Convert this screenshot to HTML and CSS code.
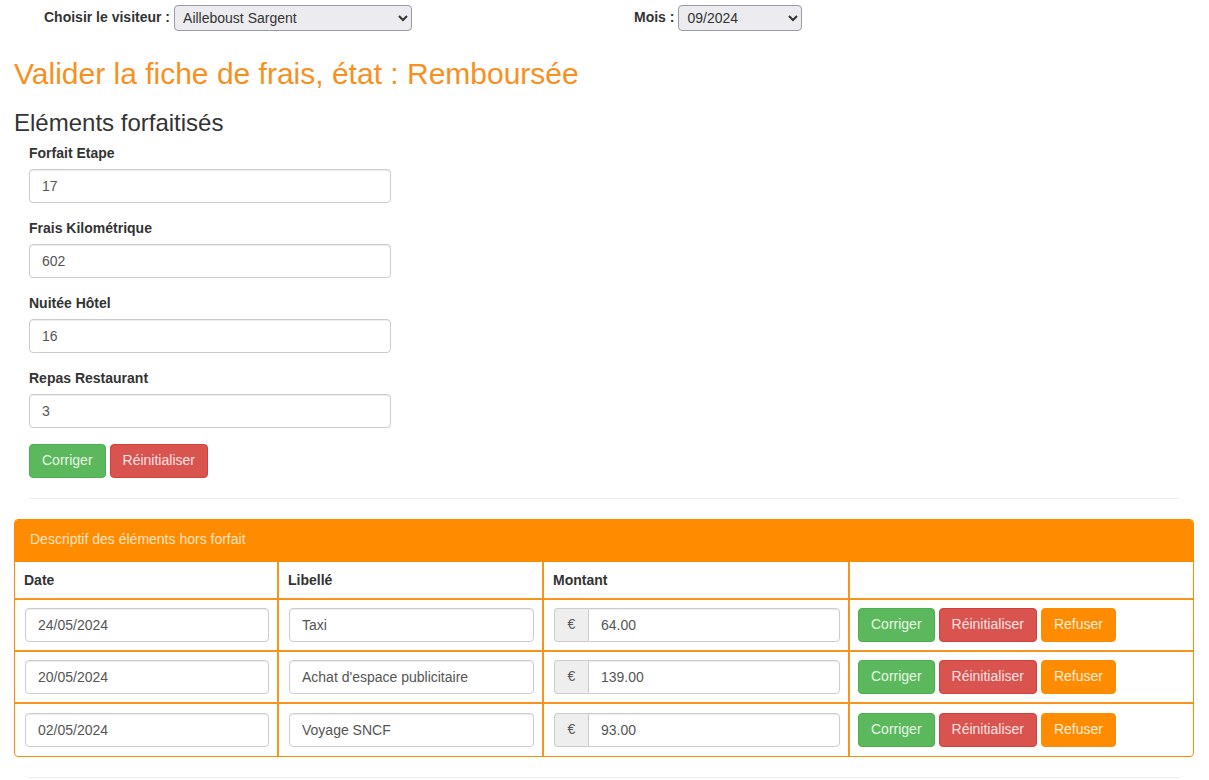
FILE: index.html
```html
<!DOCTYPE html>
<html lang="fr">
<head>
<meta charset="utf-8">
<title>Valider la fiche de frais</title>
<link rel="stylesheet" href="styles.css">
</head>
<body>
<div class="container">
  <div class="topbar">
    <div class="topcol">
      <label class="toplabel" for="visiteur">Choisir le visiteur :</label>
      <select id="visiteur" class="sel sel-visiteur"><option>Ailleboust Sargent</option></select>
    </div>
    <div class="topcol">
      <label class="toplabel" for="mois">Mois :</label>
      <select id="mois" class="sel sel-mois"><option>09/2024</option></select>
    </div>
  </div>

  <h2 class="title">Valider la fiche de frais, état : Remboursée</h2>
  <h3 class="subtitle">Eléments forfaitisés</h3>

  <form class="forfait">
    <div class="form-group">
      <label class="lbl">Forfait Etape</label>
      <input class="form-control" type="text" value="17">
    </div>
    <div class="form-group">
      <label class="lbl">Frais Kilométrique</label>
      <input class="form-control" type="text" value="602">
    </div>
    <div class="form-group">
      <label class="lbl">Nuitée Hôtel</label>
      <input class="form-control" type="text" value="16">
    </div>
    <div class="form-group">
      <label class="lbl">Repas Restaurant</label>
      <input class="form-control" type="text" value="3">
    </div>
    <div class="btns">
      <button type="button" class="btn btn-success">Corriger</button>
      <button type="button" class="btn btn-danger">Réinitialiser</button>
    </div>
  </form>

  <hr class="sep">

  <div class="panel">
    <div class="panel-heading">Descriptif des éléments hors forfait</div>
    <table class="tbl">
      <colgroup>
        <col class="c-date"><col class="c-lib"><col class="c-mont"><col class="c-act">
      </colgroup>
      <thead>
        <tr><th>Date</th><th>Libellé</th><th>Montant</th><th></th></tr>
      </thead>
      <tbody>
        <tr>
          <td><input class="form-control" type="text" value="24/05/2024"></td>
          <td><input class="form-control" type="text" value="Taxi"></td>
          <td><div class="input-group"><span class="addon">€</span><input class="form-control grp" type="text" value="64.00"></div></td>
          <td class="actions"><button type="button" class="btn btn-success">Corriger</button><button type="button" class="btn btn-danger">Réinitialiser</button><button type="button" class="btn btn-warning">Refuser</button></td>
        </tr>
        <tr>
          <td><input class="form-control" type="text" value="20/05/2024"></td>
          <td><input class="form-control" type="text" value="Achat d'espace publicitaire"></td>
          <td><div class="input-group"><span class="addon">€</span><input class="form-control grp" type="text" value="139.00"></div></td>
          <td class="actions"><button type="button" class="btn btn-success">Corriger</button><button type="button" class="btn btn-danger">Réinitialiser</button><button type="button" class="btn btn-warning">Refuser</button></td>
        </tr>
        <tr>
          <td><input class="form-control" type="text" value="02/05/2024"></td>
          <td><input class="form-control" type="text" value="Voyage SNCF"></td>
          <td><div class="input-group"><span class="addon">€</span><input class="form-control grp" type="text" value="93.00"></div></td>
          <td class="actions"><button type="button" class="btn btn-success">Corriger</button><button type="button" class="btn btn-danger">Réinitialiser</button><button type="button" class="btn btn-warning">Refuser</button></td>
        </tr>
      </tbody>
    </table>
  </div>

  <hr class="sep sep-bottom">
</div>
</body>
</html>
```

FILE: styles.css
```css
* { box-sizing: border-box; }

html, body {
  margin: 0;
  padding: 0;
  background: #fff;
}

body {
  font-family: "Liberation Sans", Arial, Helvetica, sans-serif;
  font-size: 14px;
  line-height: 1.42857;
  color: #333;
}

.container {
  padding: 0 15px 0 14px;
}

.topbar {
  display: flex;
  padding-top: 5px;
}

.topcol {
  flex: 1 1 0;
  display: flex;
  align-items: center;
  gap: 4px;
  padding-left: 30px;
}

.toplabel {
  font-weight: bold;
  font-size: 14px;
  color: #333;
}

.sel {
  height: 26px;
  font-family: "Liberation Sans", Arial, sans-serif;
  font-size: 14px;
  color: #333;
  padding: 0 4px;
  border: 1px solid #9a9aa6;
  border-radius: 4px;
  background: #ececf0;
}

.sel-visiteur { width: 238px; }
.sel-mois { width: 124px; }

.title {
  font-size: 30px;
  font-weight: normal;
  line-height: 1.1;
  color: #f7901e;
  margin: 26px 0 10px;
}

.subtitle {
  font-size: 24px;
  font-weight: normal;
  line-height: 1.1;
  color: #333;
  margin: 20px 0 8px;
}

.forfait {
  padding-left: 15px;
  width: 377px;
}

.form-group {
  margin-bottom: 16px;
}

.lbl {
  display: block;
  font-weight: bold;
  margin-bottom: 5px;
}

.form-control {
  display: block;
  width: 100%;
  height: 34px;
  padding: 6px 12px;
  font-family: "Liberation Sans", Arial, sans-serif;
  font-size: 14px;
  line-height: 1.42857;
  color: #555;
  background: #fff;
  border: 1px solid #ccc;
  border-radius: 4px;
  box-shadow: inset 0 1px 1px rgba(0,0,0,0.075);
}

.btns {
  display: flex;
  gap: 4px;
}

.btn {
  display: inline-block;
  height: 34px;
  padding: 6px 12px;
  font-family: "Liberation Sans", Arial, sans-serif;
  font-size: 14px;
  line-height: 1.42857;
  color: #f4fbf4;
  border: 1px solid transparent;
  border-radius: 4px;
  cursor: pointer;
}

.btn-success { background: #5cb85c; border-color: #4cae4c; color: #e6f5e6; }
.btn-danger { background: #d9534f; border-color: #d43f3a; color: #fbe3e2; }
.btn-warning { background: #ff8c00; border-color: #ff8c00; color: #fff0dc; }

.sep {
  border: 0;
  border-top: 1px solid #eee;
  margin: 20px 15px;
}

.sep-bottom {
  margin-top: 20px;
}

.panel {
  border: 1px solid #ff8c00;
  border-radius: 4px;
  overflow: hidden;
}

.panel-heading {
  background: #ff8c00;
  color: #fde3c4;
  padding: 10px 15px 11px;
  border-bottom: 1px solid #ff8c00;
}

.tbl {
  width: 100%;
  border-collapse: collapse;
  table-layout: fixed;
}

.c-date { width: 263px; }
.c-lib { width: 265px; }
.c-mont { width: 306px; }
.c-act { width: auto; }

.tbl th, .tbl td {
  border: 2px solid #f7931e;
  padding: 8px 8px 8px 10px;
  vertical-align: middle;
  text-align: left;
}

.tbl th {
  font-weight: bold;
  line-height: 20px;
  padding: 8px 8px 8px 9px;
}

.tbl td {
  height: 52px;
}

.tbl td.actions {
  padding-left: 8px;
}

.tbl tr > :first-child { border-left: 0; }
.tbl tr > :last-child { border-right: 0; }
.tbl tbody tr:last-child td { border-bottom: 0; height: 53px; }
.tbl thead th { border-top: 0; }

.input-group {
  display: flex;
  width: 100%;
}

.addon {
  width: 34px;
  flex: none;
  height: 34px;
  display: flex;
  align-items: center;
  justify-content: center;
  font-size: 14px;
  color: #555;
  background: #eee;
  border: 1px solid #ccc;
  border-right: 0;
  border-radius: 4px 0 0 4px;
}

.form-control.grp {
  flex: 1 1 auto;
  border-radius: 0 4px 4px 0;
}

.actions {
  white-space: nowrap;
}

.actions .btn + .btn {
  margin-left: 4px;
}
```
